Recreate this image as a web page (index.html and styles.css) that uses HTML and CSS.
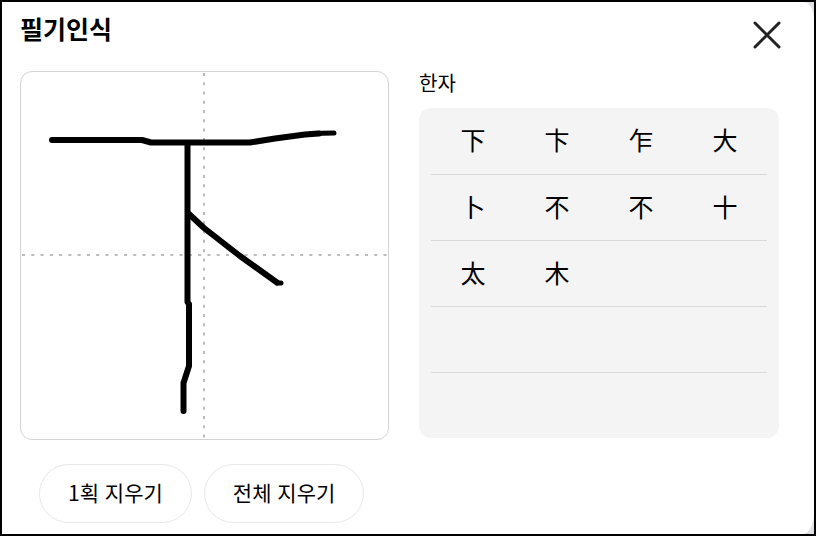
FILE: index.html
```html
<!DOCTYPE html>
<html lang="ko">
<head>
    <meta charset="UTF-8">
    <meta name="viewport" content="width=device-width, initial-scale=1.0">
    <title>필기인식</title>
    <link rel="stylesheet" href="styles.css">
</head>
<body>
    <main class="handwriting">
        <header class="handwriting-header">
            <h1>필기인식</h1>
            <button type="button" class="close-button" aria-label="닫기">
                <svg viewBox="0 0 28 28" width="28" height="28">
                    <path d="M2 2L26 26M26 2L2 26"/>
                </svg>
            </button>
        </header>

        <div class="handwriting-body">
            <section class="drawing">
                <div class="canvas">
                    <svg viewBox="0 0 367 367">
                        <!-- guide lines -->
                        <path class="guide" d="M183 1V367"/>
                        <path class="guide" d="M1 183H367"/>
                        <!-- strokes -->
                        <path class="stroke" d="M31 68H121L130 70.500H229L254 66.500L284 62.500L298 61.500"/>
                        <path class="stroke stroke-end" d="M290 61.500L313 61"/>
                        <path class="stroke" d="M166.500 71V230L168 232V294L162.500 311L162.500 339"/>
                        <path class="stroke" d="M168 142L183 156L219 184L256 210.500"/>
                        <path class="stroke stroke-end" d="M256 211H260"/>
                    </svg>
                </div>
                <div class="actions">
                    <button type="button">1획 지우기</button>
                    <button type="button">전체 지우기</button>
                </div>
            </section>

            <section class="result">
                <h2>한자</h2>
                <div class="candidates">
                    <div class="candidate-row">
                        <button type="button">下</button>
                        <button type="button">卞</button>
                        <button type="button">乍</button>
                        <button type="button">大</button>
                    </div>
                    <div class="candidate-row">
                        <button type="button">卜</button>
                        <button type="button">不</button>
                        <button type="button">不</button>
                        <button type="button">十</button>
                    </div>
                    <div class="candidate-row">
                        <button type="button">太</button>
                        <button type="button">木</button>
                    </div>
                    <div class="candidate-row"></div>
                    <div class="candidate-row"></div>
                </div>
            </section>
        </div>
    </main>
</body>
</html>
```
FILE: styles.css
```css
* {
    box-sizing: border-box;
}

body {
    margin: 0;
    min-height: 100vh;
    display: flex;
    border: 2px solid #000;
    background-color: #e0e0e5;
    color: #000;
    font-family: "Noto Sans CJK KR", sans-serif;
}

button {
    padding: 0;
    border: none;
    background: none;
    color: inherit;
    font-family: inherit;
    cursor: pointer;
}

.handwriting {
    flex: 1;
    padding: 9px 35px 11px 18px;
    background-color: #fff;
    border-radius: 0 10px 11px 0 / 0 18px 22px 0;
}

.handwriting-header {
    display: flex;
    justify-content: space-between;
    align-items: flex-start;
    height: 60px;
}

.handwriting-header h1 {
    margin: 0;
    font-size: 25px;
    line-height: 34px;
    font-weight: 700;
}

.close-button {
    display: flex;
    padding-top: 10px;
    margin-right: -2px;
}

.close-button path {
    fill: none;
    stroke: #222;
    stroke-width: 3;
    stroke-linecap: round;
}

.handwriting-body {
    display: grid;
    grid-template-columns: minmax(0, 41fr) minmax(0, 40fr);
    column-gap: 30px;
}

.canvas {
    aspect-ratio: 1;
    border: 1px solid #d3d3d3;
    border-radius: 12px;
    overflow: hidden;
}

.canvas svg {
    display: block;
    width: 100%;
}

.guide {
    fill: none;
    stroke: #bbb;
    stroke-width: 2;
    stroke-dasharray: 3 6.27;
}

.stroke {
    fill: none;
    stroke: #000;
    stroke-width: 6;
    stroke-linecap: round;
    stroke-linejoin: round;
}

.stroke-end {
    stroke-width: 5;
}

.actions {
    display: flex;
    gap: 12px;
    margin-top: 24px;
    padding-left: 19px;
}

.actions button {
    padding: 0 28px 2px;
    border: 1px solid #e8e8e8;
    border-radius: 30px;
    font-size: 21px;
    line-height: 55px;
    white-space: nowrap;
}

.result h2 {
    margin: 0 0 13px;
    font-size: 20px;
    line-height: 24px;
    font-weight: 400;
}

.candidates {
    padding: 0 12px;
    background-color: #f4f4f4;
    border-radius: 12px;
}

.candidate-row {
    display: grid;
    grid-template-columns: repeat(4, 1fr);
    height: 66px;
}

.candidate-row + .candidate-row {
    border-top: 1px solid #dadada;
}

.candidate-row button {
    padding-bottom: 4px;
    font-size: 25px;
}
```
